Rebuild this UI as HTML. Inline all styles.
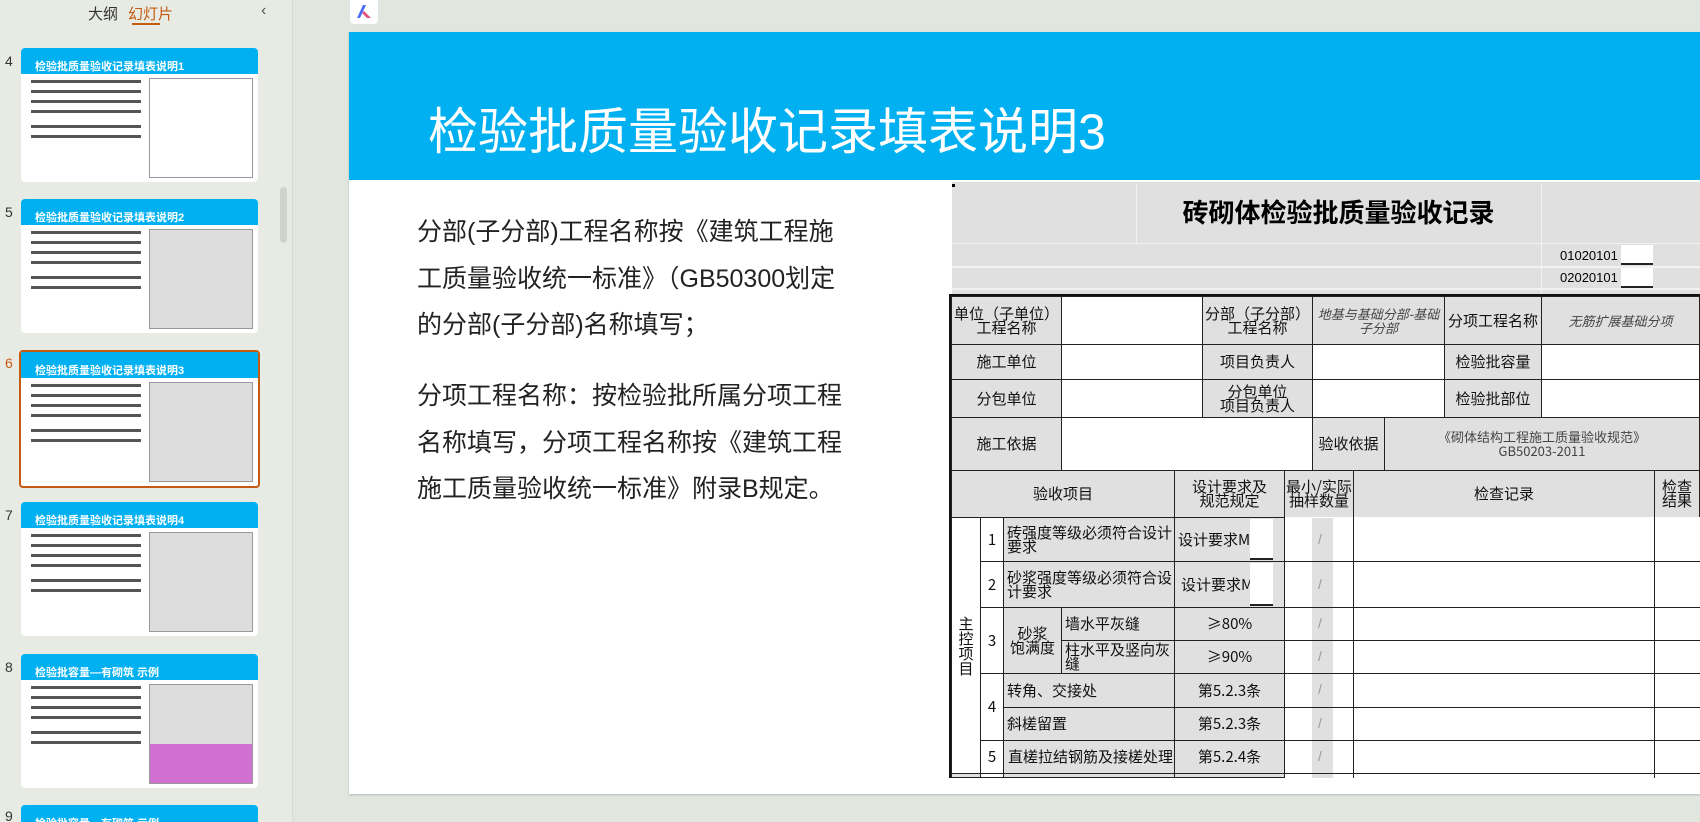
<!DOCTYPE html>
<html style="overflow:hidden;width:1700px;height:822px"><head><meta charset="utf-8"><style>
*{margin:0;padding:0;box-sizing:border-box}
body{width:1700px;height:822px;overflow:hidden;background:#e1e7de;font-family:"Liberation Sans","Noto Sans CJK SC",sans-serif;position:relative}
.a{position:absolute}
.c{position:absolute;border:1px solid #222;display:flex;align-items:center;justify-content:center;text-align:center;font-size:15px;line-height:14px;background:#e0e0e0;color:#111;font-family:"Noto Sans CJK SC",sans-serif}
.w{background:#fff}
.l{justify-content:flex-start;text-align:left;padding-left:3px}
.th{position:absolute;left:21px;width:237px;height:134px;background:#fff;border-radius:4px;overflow:hidden}
.th .h{height:26px;background:#00b0f0;color:#fff;font-size:11px;padding:10px 0 0 14px;font-weight:bold}
.th .g{position:absolute;left:128px;top:30px;width:104px;height:100px;background:#ddd;border:1px solid #999}
.th .t{position:absolute;left:10px;top:32px;width:110px;height:3px;background:#555;box-shadow:0 10px 0 #555,0 20px 0 #555,0 30px 0 #555,0 45px 0 #555,0 55px 0 #555}
.n{position:absolute;left:5px;font-size:14px;color:#333}
</style></head><body>
<div class="a" style="left:0;top:0;width:293px;height:822px;background:#e8ebe4;border-right:1px solid #d6dad2"></div>
<div class="a" style="left:88px;top:3px;font-size:15px;color:#333">大纲</div>
<div class="a" style="left:128px;top:3px;font-size:15px;color:#c55a11">幻灯片</div>
<div class="a" style="left:132px;top:23px;width:28px;height:2px;background:#c55a11"></div>
<div class="a" style="left:261px;top:2px;font-size:16px;color:#555">‹</div>
<div class="a" style="left:280px;top:187px;width:7px;height:56px;background:#d0d3cc;border-radius:4px"></div>

<div class="n" style="top:53px">4</div><div class="th" style="top:48px"><div class="h">检验批质量验收记录填表说明1</div><div class="t"></div><div class="g" style="background:#fff"></div></div>
<div class="n" style="top:204px">5</div><div class="th" style="top:199px"><div class="h">检验批质量验收记录填表说明2</div><div class="t"></div><div class="g"></div></div>
<div class="n" style="top:355px;color:#c55a11">6</div><div class="th" style="top:350px;border:2px solid #c55a11;left:19px;width:241px;height:138px"><div class="h">检验批质量验收记录填表说明3</div><div class="t"></div><div class="g"></div></div>
<div class="n" style="top:507px">7</div><div class="th" style="top:502px"><div class="h">检验批质量验收记录填表说明4</div><div class="t"></div><div class="g"></div></div>
<div class="n" style="top:659px">8</div><div class="th" style="top:654px"><div class="h">检验批容量—有砌筑 示例</div><div class="t"></div><div class="g" style="background:linear-gradient(#ddd 60%,#d070d0 60%)"></div></div>
<div class="n" style="top:808px">9</div><div class="th" style="top:805px;height:17px;border-radius:4px 4px 0 0"><div class="h">检验批容量—有砌筑 示例</div></div>

<div class="a" style="left:350px;top:0;width:28px;height:24px;background:#fff;border-radius:0 0 4px 4px"><svg width="28" height="24" viewBox="0 0 28 24"><path d="M7 18 L13 5 L16 5 L10 18 Z" fill="#4a6cf7"/><path d="M14 11 L21 18 L17 18 L12 13 Z" fill="#e0507a"/></svg></div>

<div class="a" style="left:349px;top:32px;width:1351px;height:762px;background:#fff;box-shadow:0 1px 2px rgba(0,0,0,.2)"></div>
<div class="a" style="left:349px;top:32px;width:1351px;height:148px;background:#00b0f0"></div>
<div class="a" style="left:428px;top:104px;font-size:50px;color:#fff;line-height:56px;white-space:nowrap">检验批质量验收记录填表说明3</div>
<div class="a" style="left:417px;top:209px;width:460px;font-size:25px;line-height:46.5px;color:#222;white-space:nowrap">分部(子分部)工程名称按《建筑工程施<br>工质量验收统一标准》（GB50300划定<br>的分部(子分部)名称填写；</div>
<div class="a" style="left:417px;top:373px;width:460px;font-size:25px;line-height:46.5px;color:#222;white-space:nowrap">分项工程名称：按检验批所属分项工程<br>名称填写，分项工程名称按《建筑工程<br>施工质量验收统一标准》附录B规定。</div>

<div class="a" style="left:952px;top:182px;width:748px;height:113px;background:#e0e0e0"></div>
<div class="a" style="left:952px;top:184px;width:3px;height:3px;background:#000"></div>
<div class="a" style="left:1136px;top:184px;width:1px;height:59px;background:#f2f2f2"></div>
<div class="a" style="left:1541px;top:184px;width:1px;height:110px;background:#f2f2f2"></div>
<div class="a" style="left:952px;top:243px;width:748px;height:1px;background:#f2f2f2"></div>
<div class="a" style="left:952px;top:266px;width:748px;height:2px;background:#f2f2f2"></div>
<div class="a" style="left:952px;top:288px;width:748px;height:2px;background:#f2f2f2"></div>
<div class="a" style="left:1136px;top:193px;width:405px;text-align:center;font-size:26px;font-weight:bold;font-family:'Noto Sans CJK SC',sans-serif">砖砌体检验批质量验收记录</div>
<div class="a" style="left:1560px;top:248px;font-size:13px">01020101</div>
<div class="a" style="left:1560px;top:270px;font-size:13px">02020101</div>
<div class="a" style="left:1621px;top:245px;width:32px;height:20px;background:#fff;border-bottom:2px solid #222"></div>
<div class="a" style="left:1621px;top:268px;width:32px;height:20px;background:#fff;border-bottom:2px solid #222"></div>

<div class="a" style="left:949px;top:294px;width:751px;height:484px;border:3px solid #111;border-right:none;border-bottom:none"></div>
<div class="c" style="left:951px;top:296px;width:111px;height:49px">单位（子单位）<br>工程名称</div>
<div class="c w" style="left:1061px;top:296px;width:142px;height:49px"></div>
<div class="c" style="left:1202px;top:296px;width:111px;height:49px">分部（子分部）<br>工程名称</div>
<div class="c" style="left:1312px;top:296px;width:133px;height:49px;font-size:13px;font-style:italic;color:#444">地基与基础分部-基础子分部</div>
<div class="c" style="left:1444px;top:296px;width:98px;height:49px">分项工程名称</div>
<div class="c" style="left:1541px;top:296px;width:159px;height:49px;font-size:13px;font-style:italic;color:#444">无筋扩展基础分项</div>

<div class="c" style="left:951px;top:344px;width:111px;height:36px">施工单位</div>
<div class="c w" style="left:1061px;top:344px;width:142px;height:36px"></div>
<div class="c" style="left:1202px;top:344px;width:111px;height:36px">项目负责人</div>
<div class="c w" style="left:1312px;top:344px;width:133px;height:36px"></div>
<div class="c" style="left:1444px;top:344px;width:98px;height:36px">检验批容量</div>
<div class="c w" style="left:1541px;top:344px;width:159px;height:36px"></div>

<div class="c" style="left:951px;top:379px;width:111px;height:39px">分包单位</div>
<div class="c w" style="left:1061px;top:379px;width:142px;height:39px"></div>
<div class="c" style="left:1202px;top:379px;width:111px;height:39px">分包单位<br>项目负责人</div>
<div class="c w" style="left:1312px;top:379px;width:133px;height:39px"></div>
<div class="c" style="left:1444px;top:379px;width:98px;height:39px">检验批部位</div>
<div class="c w" style="left:1541px;top:379px;width:159px;height:39px"></div>

<div class="c" style="left:951px;top:417px;width:111px;height:54px">施工依据</div>
<div class="c w" style="left:1061px;top:417px;width:252px;height:54px"></div>
<div class="c" style="left:1312px;top:417px;width:73px;height:54px">验收依据</div>
<div class="c" style="left:1384px;top:417px;width:316px;height:54px;font-size:13px;color:#444">《砌体结构工程施工质量验收规范》<br>GB50203-2011</div>

<div class="c" style="left:951px;top:470px;width:224px;height:48px">验收项目</div>
<div class="c" style="left:1174px;top:470px;width:111px;height:48px">设计要求及<br>规范规定</div>
<div class="c" style="left:1284px;top:470px;width:70px;height:48px">最小/实际<br>抽样数量</div>
<div class="c" style="left:1353px;top:470px;width:302px;height:48px">检查记录</div>
<div class="c" style="left:1654px;top:470px;width:46px;height:48px">检查<br>结果</div>

<div class="c w" style="left:951px;top:517px;width:30px;height:257px;writing-mode:vertical-rl;line-height:15px">主控项目</div>
<div class="c w" style="left:980px;top:517px;width:24px;height:45px">1</div>
<div class="c l" style="left:1003px;top:517px;width:172px;height:45px">砖强度等级必须符合设计要求</div>
<div class="c" style="left:1174px;top:517px;width:111px;height:45px;justify-content:flex-start;padding-left:3px">设计要求MU</div>
<div class="c w" style="left:980px;top:561px;width:24px;height:47px">2</div>
<div class="c l" style="left:1003px;top:561px;width:172px;height:47px">砂浆强度等级必须符合设计要求</div>
<div class="c" style="left:1174px;top:561px;width:111px;height:47px;justify-content:flex-start;padding-left:6px">设计要求M</div>
<div class="a" style="left:1250px;top:519px;width:23px;height:41px;background:#fff;border-bottom:2px solid #222"></div>
<div class="a" style="left:1250px;top:563px;width:23px;height:43px;background:#fff;border-bottom:2px solid #222"></div>
<div class="c w" style="left:980px;top:607px;width:24px;height:67px">3</div>
<div class="c" style="left:1003px;top:607px;width:59px;height:67px">砂浆<br>饱满度</div>
<div class="c l" style="left:1061px;top:607px;width:114px;height:34px">墙水平灰缝</div>
<div class="c l" style="left:1061px;top:640px;width:114px;height:34px">柱水平及竖向灰缝</div>
<div class="c" style="left:1174px;top:607px;width:111px;height:34px">≥80%</div>
<div class="c" style="left:1174px;top:640px;width:111px;height:34px">≥90%</div>
<div class="c w" style="left:980px;top:673px;width:24px;height:68px">4</div>
<div class="c l" style="left:1003px;top:673px;width:172px;height:35px">转角、交接处</div>
<div class="c l" style="left:1003px;top:707px;width:172px;height:34px">斜槎留置</div>
<div class="c" style="left:1174px;top:673px;width:111px;height:35px">第5.2.3条</div>
<div class="c" style="left:1174px;top:707px;width:111px;height:34px">第5.2.3条</div>
<div class="c w" style="left:980px;top:740px;width:24px;height:34px">5</div>
<div class="c l" style="left:1003px;top:740px;width:172px;height:34px;padding-left:4px;white-space:nowrap">直槎拉结钢筋及接槎处理</div>
<div class="c" style="left:1174px;top:740px;width:111px;height:34px">第5.2.4条</div>
<div class="c" style="left:951px;top:773px;width:30px;height:5px"></div>
<div class="c w" style="left:980px;top:773px;width:24px;height:5px"></div>
<div class="c" style="left:1003px;top:773px;width:172px;height:5px"></div>
<div class="c" style="left:1174px;top:773px;width:111px;height:5px"></div>
<div class="a" style="left:1284px;top:517px;width:416px;height:261px;background:#fff"></div>
<div class="a" style="left:1312px;top:518px;width:21px;height:260px;background:#e0e0e0"></div>
<div class="a" style="left:1284px;top:517px;width:1px;height:261px;background:#222"></div>
<div class="a" style="left:1353px;top:517px;width:1px;height:261px;background:#222"></div>
<div class="a" style="left:1654px;top:517px;width:1px;height:261px;background:#222"></div>
<div class="a" style="left:1284px;top:561px;width:416px;height:1px;background:#222"></div>
<div class="a" style="left:1284px;top:607px;width:416px;height:1px;background:#222"></div>
<div class="a" style="left:1284px;top:640px;width:416px;height:1px;background:#222"></div>
<div class="a" style="left:1284px;top:673px;width:416px;height:1px;background:#222"></div>
<div class="a" style="left:1284px;top:707px;width:416px;height:1px;background:#222"></div>
<div class="a" style="left:1284px;top:740px;width:416px;height:1px;background:#222"></div>
<div class="a" style="left:1284px;top:773px;width:416px;height:1px;background:#222"></div>
<div class="a" style="left:1318px;top:531px;color:#999;font-size:14px">/</div>
<div class="a" style="left:1318px;top:576px;color:#999;font-size:14px">/</div>
<div class="a" style="left:1318px;top:615px;color:#999;font-size:14px">/</div>
<div class="a" style="left:1318px;top:648px;color:#999;font-size:14px">/</div>
<div class="a" style="left:1318px;top:681px;color:#999;font-size:14px">/</div>
<div class="a" style="left:1318px;top:715px;color:#999;font-size:14px">/</div>
<div class="a" style="left:1318px;top:748px;color:#999;font-size:14px">/</div>
<div class="a" style="left:949px;top:778px;width:751px;height:16px;background:#fff"></div>
</body></html>
